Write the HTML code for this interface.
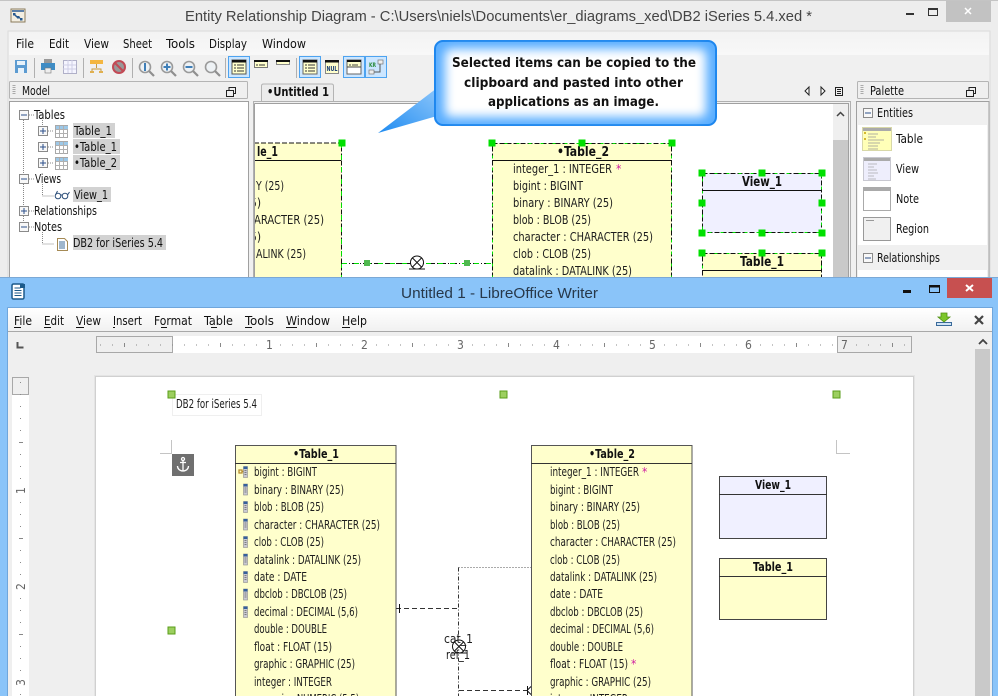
<!DOCTYPE html>
<html><head><meta charset="utf-8"><title>Entity Relationship Diagram</title>
<style>
html,body{margin:0;padding:0;width:998px;height:696px;overflow:hidden;background:#f0f0f0}
svg{display:block;font-family:"DejaVu Sans Condensed","DejaVu Sans",sans-serif;font-stretch:condensed;font-size:12px;fill:#1a1a1a}
.b{font-weight:bold}.t{font-size:13px}.m{fill:#111}.r{fill:#1c1c1c}.g{fill:#666;font-size:12px}.w{font-size:12px}
.ti{font-family:"Liberation Sans",sans-serif;font-stretch:normal;font-size:15px}
</style></head><body>
<svg width="998" height="696" viewBox="0 0 998 696" xmlns="http://www.w3.org/2000/svg">
<defs>
<linearGradient id="mg" x1="0" y1="0" x2="0" y2="1"><stop offset="0" stop-color="#f3f3f3"/><stop offset="1" stop-color="#f8f8f8"/></linearGradient>
<linearGradient id="wm" x1="0" y1="0" x2="0" y2="1"><stop offset="0" stop-color="#fff"/><stop offset="1" stop-color="#f1f1f1"/></linearGradient>
<linearGradient id="tl" x1="0" y1="1" x2="1" y2="0"><stop offset="0" stop-color="#1f8bf0"/><stop offset="1" stop-color="#8cc6fb"/></linearGradient>
<filter id="bl" x="-20%" y="-30%" width="140%" height="160%"><feGaussianBlur stdDeviation="5"/></filter>
<clipPath id="can"><rect x="255" y="104" width="578" height="173"/></clipPath>
<clipPath id="pg"><rect x="96" y="376" width="817" height="320"/></clipPath>
<g id="h"><rect x="-3.5" y="-3.5" width="7" height="7" fill="#00e000"/></g>
<g id="wh"><rect x="-3.5" y="-3.5" width="7" height="7" fill="#9ccf5f" stroke="#5a9e1a"/></g>
<g id="plus"><rect x=".5" y=".5" width="9" height="9" fill="#f8f8f8" stroke="#8a8a8a"/><path d="M2 5h6M5 2v6" stroke="#2d4f8a" fill="none"/></g>
<g id="minus"><rect x=".5" y=".5" width="9" height="9" fill="#f8f8f8" stroke="#8a8a8a"/><path d="M2 5h6" stroke="#2d4f8a" fill="none"/></g>
<g id="grid"><rect x=".5" y=".5" width="12" height="12" fill="#fff" stroke="#a8a8a8"/><rect x="1" y="1" width="12" height="3" fill="#9cc8e8"/><path d="M1 4.500h12M1 8.500h12M4.500 1v12M8.500 1v12" stroke="#b0b0b0" fill="none"/></g>
<g id="col"><rect x="0" y="0" width="4" height="11" fill="#c9c9d2" stroke="#8c8c8c" stroke-width=".6"/><rect x="0" y="0" width="4" height="2.500" fill="#35609c"/><path d="M1 4h2M1 6h2M1 8h2" stroke="#666" stroke-width=".7"/></g>
<g id="mag"><circle cx="7" cy="7" r="5.500" fill="#eef2f5" stroke="#9a9a9a" stroke-width="1.600"/><path d="M11 11l5 5" stroke="#8f8f8f" stroke-width="2.200"/></g>
<g id="tog"><rect x=".5" y=".5" width="21" height="21" fill="#cce6ff" stroke="#4da3f0"/></g>
<g id="sym"><circle cx="0" cy="-.5" r="6.500" fill="#fff" stroke="#111"/><path d="M-8 6h16" stroke="#111"/><path d="M-4.500 4L4.500 -5M-4.500 -5L4.500 4" stroke="#111" fill="none"/></g>
</defs>

<!-- TOP WINDOW -->
<rect width="998" height="278" fill="#ededed"/>
<rect x="0" y="0" width="998" height="1" fill="#c4c4c4"/>
<rect x="11" y="9" width="14" height="13" fill="#f4efe2" stroke="#8a7b5c"/>
<rect x="12" y="10" width="12" height="2" fill="#5b7fa8"/>
<path d="M14 14l3 3 3 1" stroke="#27598f" stroke-width="1.500" fill="none"/>
<rect x="13" y="13" width="2.500" height="2.500" fill="#27598f"/><rect x="17" y="16" width="2.500" height="2.500" fill="#27598f"/><rect x="20" y="18" width="2.500" height="2.500" fill="#27598f"/>
<text x="185" y="21" class="ti" style="fill:#444" textLength="627" lengthAdjust="spacingAndGlyphs">Entity Relationship Diagram - C:\Users\niels\Documents\er_diagrams_xed\DB2 iSeries 5.4.xed *</text>
<rect x="906" y="13" width="8" height="2" fill="#333"/>
<rect x="928.500" y="8.500" width="9" height="7" fill="none" stroke="#333"/><rect x="928" y="8" width="10" height="2" fill="#333"/>
<rect x="946" y="1" width="45" height="21" fill="#c2c2c2"/>
<path d="M965 8l6 6M971 8l-6 6" stroke="#fff" stroke-width="1.500"/>

<rect x="8" y="31" width="982" height="247" fill="#f0f0f0" stroke="#dcdcdc"/>
<rect x="9" y="32" width="980" height="23" fill="url(#mg)"/>
<g class="m">
<text x="16" y="48" textLength="18" lengthAdjust="spacingAndGlyphs">File</text>
<text x="49" y="48" textLength="20" lengthAdjust="spacingAndGlyphs">Edit</text>
<text x="84" y="48" textLength="25" lengthAdjust="spacingAndGlyphs">View</text>
<text x="123" y="48" textLength="29" lengthAdjust="spacingAndGlyphs">Sheet</text>
<text x="166" y="48" textLength="29" lengthAdjust="spacingAndGlyphs">Tools</text>
<text x="209" y="48" textLength="38" lengthAdjust="spacingAndGlyphs">Display</text>
<text x="262" y="48" textLength="44" lengthAdjust="spacingAndGlyphs">Window</text>
</g>
<!-- toolbar -->
<path d="M15 60h12v13h-12z" fill="#5c9bd1"/><rect x="17" y="61" width="8" height="4" fill="#e8f2fa"/><rect x="18" y="68" width="6" height="5" fill="#e8f2fa"/>
<rect x="34" y="58" width="1" height="20" fill="#b0b0b0"/>
<rect x="41" y="63" width="14" height="7" fill="#3f8cc4"/><rect x="44" y="59" width="8" height="4" fill="#999"/><rect x="45" y="68" width="6" height="5" fill="#eee" stroke="#777" stroke-width=".6"/>
<rect x="63.500" y="60.500" width="13" height="13" fill="#f5f5ff" stroke="#b0b0c8"/><path d="M63 65h13M63 69h13M68 60v13M72 60v13" stroke="#cfcfe6" fill="none"/>
<rect x="83" y="58" width="1" height="20" fill="#b0b0b0"/>
<rect x="90" y="60" width="13" height="4" fill="#f4b63f"/><path d="M96.500 64v4M92 72v-3h9v3" stroke="#c89a3c" fill="none"/><rect x="90" y="71" width="4" height="2" fill="#e0b050"/><rect x="99" y="71" width="4" height="2" fill="#e0b050"/>
<circle cx="119" cy="67" r="6" fill="#999" stroke="#c24a55" stroke-width="2"/><path d="M115 63l8 8" stroke="#c24a55" stroke-width="2"/>
<rect x="132" y="58" width="1" height="20" fill="#b0b0b0"/>
<use href="#mag" x="138" y="60"/><rect x="144" y="63" width="2" height="8" fill="#3f7fb8"/>
<use href="#mag" x="160" y="60"/><path d="M163.500 67h7M167 63.500v7" stroke="#3f7fb8" stroke-width="2"/>
<use href="#mag" x="182" y="60"/><path d="M185.500 67h7" stroke="#3f7fb8" stroke-width="2"/>
<use href="#mag" x="204" y="60"/>
<rect x="225" y="58" width="1" height="20" fill="#b0b0b0"/>
<use href="#tog" x="228" y="56"/>
<rect x="232" y="60" width="14" height="14" fill="#ffffcc" stroke="#555"/><rect x="232" y="60" width="14" height="2.500" fill="#111"/><path d="M234 65h2M237 65h7M234 68h2M237 68h7M234 71h2M237 71h7" stroke="#333" fill="none"/>
<rect x="254.500" y="60.500" width="13" height="7" fill="#ffffcc" stroke="#777"/><rect x="254" y="60" width="14" height="2" fill="#111"/><path d="M256 65h2M259 65h6" stroke="#333"/>
<rect x="276.500" y="60.500" width="13" height="4" fill="#ffffcc" stroke="#888"/><rect x="276" y="60" width="14" height="2" fill="#111"/>
<rect x="296" y="58" width="1" height="20" fill="#b0b0b0"/>
<use href="#tog" x="299" y="56"/>
<rect x="303" y="60" width="14" height="14" fill="#ffffcc" stroke="#666"/><rect x="303" y="60" width="14" height="2.500" fill="#111"/><path d="M305 65h2M308 65h7M305 68h2M308 68h7M305 71h2M308 71h7" stroke="#333" fill="none"/>
<rect x="325.500" y="60.500" width="13" height="13" fill="#ffffcc" stroke="#888"/><rect x="325" y="60" width="14" height="2.500" fill="#111"/>
<text x="326.500" y="71" class="b" style="font-size:7px;fill:#1d3f78" textLength="11" lengthAdjust="spacingAndGlyphs">NUL</text>
<use href="#tog" x="343" y="56"/>
<rect x="347" y="60" width="14" height="14" fill="#fff" stroke="#666"/><rect x="347.500" y="60.500" width="13" height="6" fill="#ffffcc"/><rect x="347" y="60" width="14" height="2" fill="#111"/><path d="M349 65h2M352 65h6M347 67h14" stroke="#444"/>
<use href="#tog" x="365" y="56"/>
<text x="369" y="67" class="b" style="font-size:6px;fill:#2a8a3a" textLength="7" lengthAdjust="spacingAndGlyphs">KR</text>
<rect x="378" y="60" width="5" height="4" fill="#eee" stroke="#777" stroke-width=".7"/><rect x="369" y="70" width="5" height="4" fill="#eee" stroke="#777" stroke-width=".7"/><path d="M380 64v8h-6" fill="none" stroke="#555"/>

<!-- model panel -->
<rect x="9.500" y="81.500" width="238" height="17" rx="1" fill="#efefef" stroke="#b4b4b4"/>
<path d="M14 85v10" stroke="#aaa" stroke-dasharray="1 1" stroke-width="3"/>
<text x="22" y="95" class="m" textLength="28" lengthAdjust="spacingAndGlyphs">Model</text>
<rect x="226.500" y="90.500" width="7" height="6" fill="none" stroke="#222"/><path d="M229 90v-2.500h6.500v6h-2" fill="none" stroke="#222"/>
<rect x="9.500" y="101.500" width="239" height="180" fill="#fff" stroke="#a0a0a0"/>
<!-- tree -->
<path d="M23.500 120v108M29 115h5M29 179h5M29 211h5M29 227h5M48 131h6M48 147h6M48 163h6" stroke="#888" stroke-dasharray="1 1" fill="none"/>
<path d="M42.500 120v12M42.500 184v12h12M42.500 232v12h12" stroke="#888" stroke-dasharray="1 1" fill="none"/>
<use href="#minus" x="19" y="110"/><use href="#minus" x="19" y="174"/><use href="#plus" x="19" y="206"/><use href="#minus" x="19" y="222"/>
<use href="#plus" x="38" y="126"/><use href="#plus" x="38" y="142"/><use href="#plus" x="38" y="158"/>
<use href="#grid" x="55" y="125"/><use href="#grid" x="55" y="141"/><use href="#grid" x="55" y="157"/>
<rect x="73" y="123" width="42" height="15" fill="#d2d2d2"/><rect x="73" y="139" width="47" height="15" fill="#d2d2d2"/><rect x="73" y="155" width="47" height="15" fill="#d2d2d2"/><rect x="73" y="187" width="38" height="15" fill="#d2d2d2"/><rect x="73" y="235" width="93" height="15" fill="#d2d2d2"/>
<g class="m">
<text x="34" y="119" textLength="31" lengthAdjust="spacingAndGlyphs">Tables</text>
<text x="74" y="135" textLength="38" lengthAdjust="spacingAndGlyphs">Table_1</text>
<text x="74" y="151" textLength="43" lengthAdjust="spacingAndGlyphs">•Table_1</text>
<text x="74" y="167" textLength="43" lengthAdjust="spacingAndGlyphs">•Table_2</text>
<text x="35" y="183" textLength="26" lengthAdjust="spacingAndGlyphs">Views</text>
<text x="74" y="199" textLength="34" lengthAdjust="spacingAndGlyphs">View_1</text>
<text x="34" y="215" textLength="63" lengthAdjust="spacingAndGlyphs">Relationships</text>
<text x="34" y="231" textLength="28" lengthAdjust="spacingAndGlyphs">Notes</text>
<text x="73" y="247" textLength="90" lengthAdjust="spacingAndGlyphs">DB2 for iSeries 5.4</text>
</g>
<g fill="none" stroke="#2d4f7a"><circle cx="58" cy="196" r="2.800"/><circle cx="65" cy="196" r="2.800"/><path d="M60.500 195h2M55.500 195l2-4M67.500 195l2-3"/></g>
<path d="M57.500 238.500h7l3 3v9h-10z" fill="#fff" stroke="#a58a55"/><path d="M59 242h6M59 244h6M59 246h6M59 248h6" stroke="#3f6c9a"/>

<!-- editor -->
<path d="M261.500 102v-16q0-2 2-2h68q2 0 2 2v16" fill="#ececec" stroke="#b4b4b4"/>
<text x="267" y="96" class="b" style="fill:#111" textLength="62" lengthAdjust="spacingAndGlyphs">•Untitled 1</text>
<rect x="253.500" y="101.500" width="597" height="180" fill="#f0f0f0" stroke="#b0b0b0"/>
<rect x="255" y="104" width="578" height="174" fill="#fff" stroke="none"/>
<path d="M254.500 103.500h594v175" fill="none" stroke="#a0a0a0"/><path d="M254.500 103.500v175" stroke="#a0a0a0"/>
<rect x="833" y="104" width="15" height="174" fill="#efefef"/><rect x="833" y="140" width="15" height="138" fill="#c9c9c9"/>
<path d="M837 116l3.500-3.500 3.500 3.500" fill="none" stroke="#444" stroke-width="1.500"/>
<path d="M809 87v8l-4-4zM821 87v8l4-4z" fill="#fff" stroke="#222"/>
<rect x="835.500" y="87.500" width="7" height="8" fill="none" stroke="#222"/><path d="M837 89.500h4M837 91.500h4M837 93.500h4" stroke="#222"/>

<g clip-path="url(#can)">
<rect x="240" y="143" width="101.500" height="140" fill="#ffffcc" stroke="#111" stroke-dasharray="5 2"/>
<path d="M240 160.500h101" stroke="#111"/>
<path d="M341.500 143v140" stroke="#00e000" stroke-dasharray="5 7"/>
<text x="257" y="156" class="b t" fill="#111" textLength="21" lengthAdjust="spacingAndGlyphs">le_1</text>
<g class="r">
<text x="256" y="190" textLength="28" lengthAdjust="spacingAndGlyphs">Y (25)</text>
<text x="250" y="207">5)</text>
<text x="254" y="224" textLength="70" lengthAdjust="spacingAndGlyphs">ARACTER (25)</text>
<text x="250" y="241">5)</text>
<text x="256" y="258" textLength="50" lengthAdjust="spacingAndGlyphs">ALINK (25)</text>
</g>
<!-- conn -->
<path d="M341 263.500h151" stroke="#111" stroke-dasharray="6 2 1 2"/>
<path d="M341 263.500h151" stroke="#00e000" stroke-dasharray="5 7" stroke-dashoffset="-1"/>
<rect x="364" y="260" width="6" height="6" fill="#4fb84f"/><rect x="464" y="260" width="6" height="6" fill="#4fb84f"/>
<use href="#sym" x="417" y="263"/>
<!-- Table_2 -->
<rect x="492.500" y="143.500" width="179" height="140" fill="#ffffcc" stroke="#111" stroke-dasharray="5 2"/>
<path d="M492.500 143.500v140M671.500 143.500v140M492.500 143.500h179" stroke="#00e000" stroke-dasharray="3 9" fill="none"/>
<path d="M492 160.500h180" stroke="#111"/>
<text x="557" y="156" class="b t" fill="#111" textLength="52" lengthAdjust="spacingAndGlyphs">•Table_2</text>
<g class="r">
<text x="513" y="173" textLength="99" lengthAdjust="spacingAndGlyphs">integer_1 : INTEGER</text>
<text x="513" y="190" textLength="70" lengthAdjust="spacingAndGlyphs">bigint : BIGINT</text>
<text x="513" y="207" textLength="100" lengthAdjust="spacingAndGlyphs">binary : BINARY (25)</text>
<text x="513" y="224" textLength="78" lengthAdjust="spacingAndGlyphs">blob : BLOB (25)</text>
<text x="513" y="241" textLength="140" lengthAdjust="spacingAndGlyphs">character : CHARACTER (25)</text>
<text x="513" y="258" textLength="78" lengthAdjust="spacingAndGlyphs">clob : CLOB (25)</text>
<text x="513" y="275" textLength="119" lengthAdjust="spacingAndGlyphs">datalink : DATALINK (25)</text>
</g>
<text x="616" y="173" style="fill:#d020a0;font-size:12px">*</text>
<!-- View_1 -->
<rect x="702.500" y="173.500" width="119" height="59" fill="#f0f0ff" stroke="#111" stroke-dasharray="5 2"/>
<path d="M702.500 173.500h119v59h-119z" fill="none" stroke="#00e000" stroke-dasharray="3 9"/>
<path d="M702 190.500h120" stroke="#111"/>
<text x="742" y="186" class="b t" fill="#111" textLength="40" lengthAdjust="spacingAndGlyphs">View_1</text>
<!-- Table_1 small -->
<rect x="702.500" y="253.500" width="119" height="60" fill="#ffffcc" stroke="#111" stroke-dasharray="5 2"/>
<path d="M702.500 253.500h119M702.500 253.500v30M821.500 253.500v30" fill="none" stroke="#00e000" stroke-dasharray="3 9"/>
<path d="M702 270.500h120" stroke="#111"/>
<text x="740" y="266" class="b t" fill="#111" textLength="44" lengthAdjust="spacingAndGlyphs">Table_1</text>
<use href="#h" x="342" y="143"/>
<use href="#h" x="492" y="143"/><use href="#h" x="582" y="143"/><use href="#h" x="672" y="143"/>
<use href="#h" x="702" y="173"/><use href="#h" x="762" y="173"/><use href="#h" x="822" y="173"/>
<use href="#h" x="702" y="203"/><use href="#h" x="822" y="203"/>
<use href="#h" x="702" y="233"/><use href="#h" x="762" y="233"/><use href="#h" x="822" y="233"/>
<use href="#h" x="702" y="253"/><use href="#h" x="762" y="253"/><use href="#h" x="822" y="253"/>
</g>

<!-- palette -->
<rect x="857.500" y="81.500" width="131" height="17" rx="1" fill="#efefef" stroke="#b4b4b4"/>
<path d="M862 85v10" stroke="#aaa" stroke-dasharray="1 1" stroke-width="3"/>
<text x="870" y="95" class="m" textLength="34" lengthAdjust="spacingAndGlyphs">Palette</text>
<rect x="966.500" y="90.500" width="7" height="6" fill="none" stroke="#222"/><path d="M969 90v-2.500h6.500v6h-2" fill="none" stroke="#222"/>
<rect x="856.500" y="101.500" width="132.500" height="180" fill="#f0f0f0" stroke="#a0a0a0"/>
<rect x="858" y="125" width="129" height="120" fill="#fff"/><rect x="858" y="270" width="129" height="10" fill="#fff"/>
<use href="#minus" x="863" y="108"/><use href="#minus" x="863" y="253"/>
<text x="877" y="117" class="m" textLength="36" lengthAdjust="spacingAndGlyphs">Entities</text>
<text x="877" y="262" class="m" textLength="63" lengthAdjust="spacingAndGlyphs">Relationships</text>
<g class="m">
<text x="896" y="143" textLength="27" lengthAdjust="spacingAndGlyphs">Table</text>
<text x="896" y="173" textLength="23" lengthAdjust="spacingAndGlyphs">View</text>
<text x="896" y="203" textLength="23" lengthAdjust="spacingAndGlyphs">Note</text>
<text x="896" y="233" textLength="33" lengthAdjust="spacingAndGlyphs">Region</text>
</g>
<rect x="862.500" y="127.500" width="29" height="23" fill="#ffffb8" stroke="#d8d8a8"/><rect x="863" y="128" width="28" height="3" fill="#aaa"/><path d="M868 134h10M868 137h8M868 140h16M868 143h12M868 146h10M868 149h10" stroke="#999" stroke-width=".7"/><path d="M864 133h2M864 139h2" stroke="#c9a000" stroke-width="1.500"/>
<rect x="863.500" y="157.500" width="27" height="23" fill="#eeeefc" stroke="#c8c8d0"/><rect x="864" y="158" width="26" height="3" fill="#aaa"/><path d="M868 164h9M868 167h6M868 170h9M868 173h10M868 176h6M868 179h8" stroke="#aaa" stroke-width=".7"/>
<rect x="863.500" y="187.500" width="27" height="23" fill="#fff" stroke="#aaa"/><rect x="864" y="188" width="26" height="3" fill="#aaa"/>
<rect x="863.500" y="217.500" width="27" height="23" fill="#f0f0f0" stroke="#999"/><path d="M866 220.500h8" stroke="#999"/>

<!-- WRITER WINDOW -->
<rect x="0" y="278" width="998" height="418" fill="#8ac4f9"/>
<rect x="0" y="277" width="998" height="1" fill="#7ca9d6"/>
<rect x="12" y="284" width="12" height="15" rx="1.500" fill="#fff" stroke="#1c5a8a" stroke-width="1.500"/><path d="M20 284l5 0 0 4-5 0z" fill="#1c5a8a"/><path d="M14.500 288h6M14.500 290.500h7M14.500 293h7M14.500 295.500h7" stroke="#1c5a8a"/>
<text x="401" y="298" class="ti" style="fill:#27384a" textLength="197" lengthAdjust="spacingAndGlyphs">Untitled 1 - LibreOffice Writer</text>
<rect x="903" y="290" width="8" height="3" fill="#111"/>
<rect x="929.500" y="285.500" width="10" height="7" fill="none" stroke="#111"/><rect x="929" y="285" width="11" height="2.500" fill="#111"/>
<rect x="947" y="278" width="45" height="20" fill="#c75050"/>
<path d="M966 285l7 6M973 285l-7 6" stroke="#fff" stroke-width="2"/>

<rect x="8" y="308" width="984" height="388" fill="#efefef"/>
<path d="M7.500 307.500h985V696M7.500 307.500V696" fill="none" stroke="#6fa6dc"/>
<rect x="8" y="308" width="984" height="23" fill="url(#wm)"/>
<rect x="8" y="331" width="984" height="1" fill="#a8a8a8"/>
<g class="m">
<text x="14" y="325" textLength="18" lengthAdjust="spacingAndGlyphs">File</text>
<text x="44" y="325" textLength="20" lengthAdjust="spacingAndGlyphs">Edit</text>
<text x="76" y="325" textLength="25" lengthAdjust="spacingAndGlyphs">View</text>
<text x="113" y="325" textLength="29" lengthAdjust="spacingAndGlyphs">Insert</text>
<text x="154" y="325" textLength="38" lengthAdjust="spacingAndGlyphs">Format</text>
<text x="204" y="325" textLength="29" lengthAdjust="spacingAndGlyphs">Table</text>
<text x="245" y="325" textLength="29" lengthAdjust="spacingAndGlyphs">Tools</text>
<text x="286" y="325" textLength="44" lengthAdjust="spacingAndGlyphs">Window</text>
<text x="342" y="325" textLength="25" lengthAdjust="spacingAndGlyphs">Help</text>
</g>
<path d="M14 327.500h7M44 327.500h7M76 327.500h8M113 327.500h2M161 327.500h6M211 327.500h6M245 327.500h7M286 327.500h11M342 327.500h8" stroke="#111"/>
<path d="M936.500 325.500h15v-3h-15z" fill="#cfe3f5" stroke="#3a6a9a"/><path d="M941 313h6v4h3l-6 5-6-5h3z" fill="#7cc62a" stroke="#4f8f12" stroke-width=".8"/>
<path d="M975 316l8 8M983 316l-8 8" stroke="#444" stroke-width="2.200"/>
<path d="M17.500 342v5.500h6" fill="none" stroke="#555" stroke-width="2"/>

<!-- h-ruler -->
<rect x="96" y="336" width="816" height="17" fill="#fff"/>
<rect x="96.500" y="336.500" width="76" height="16" fill="#efefef" stroke="#a8a8a8"/>
<rect x="837.500" y="336.500" width="74" height="16" fill="#efefef" stroke="#a8a8a8"/>
<path d="M100 345h808" stroke="#8a8a8a" stroke-dasharray="1 11"/>
<path d="M124.500 343v4M220.500 343v4M316.500 343v4M412.500 343v4M508.500 343v4M604.500 343v4M700.500 343v4M796.500 343v4M892.500 343v4" stroke="#888"/>
<g class="g"><rect x="264" y="338" width="10" height="14" fill="#fff"/><text x="266" y="349">1</text>
<rect x="360" y="338" width="10" height="14" fill="#fff"/><text x="361" y="349">2</text>
<rect x="456" y="338" width="10" height="14" fill="#fff"/><text x="457" y="349">3</text>
<rect x="552" y="338" width="10" height="14" fill="#fff"/><text x="553" y="349">4</text>
<rect x="648" y="338" width="10" height="14" fill="#fff"/><text x="649" y="349">5</text>
<rect x="744" y="338" width="10" height="14" fill="#fff"/><text x="745" y="349">6</text>
<rect x="839" y="338" width="10" height="13" fill="#efefef"/><text x="841" y="349">7</text></g>

<!-- scrollbar -->
<rect x="975" y="332" width="15" height="364" fill="#efefef"/><rect x="975" y="349" width="15" height="347" fill="#c9c9c9"/>
<path d="M979 344l4-4 4 4" fill="none" stroke="#444" stroke-width="1.800"/>

<!-- v-ruler -->
<rect x="12" y="394" width="17" height="302" fill="#fff"/>
<rect x="12.500" y="377.500" width="16" height="17" fill="#efefef" stroke="#a8a8a8"/>
<path d="M20.500 382v314" stroke="#8a8a8a" stroke-dasharray="1 11"/>
<path d="M19 442.500h4M19 538.500h4M19 634.500h4" stroke="#888"/>
<g class="g"><rect x="14" y="484" width="12" height="12" fill="#fff"/><text transform="translate(25 494) rotate(-90)">1</text>
<rect x="14" y="580" width="12" height="12" fill="#fff"/><text transform="translate(25 590) rotate(-90)">2</text>
<rect x="14" y="676" width="12" height="12" fill="#fff"/><text transform="translate(25 686) rotate(-90)">3</text></g>

<!-- page -->
<rect x="94" y="375" width="821" height="321" fill="#e4e4e4"/>
<rect x="96" y="377" width="817" height="319" fill="#fff"/>
<path d="M95.500 696V376.500H913.500V696" fill="none" stroke="#d0d0d0"/>
<g clip-path="url(#pg)" class="w">
<rect x="172.500" y="394.500" width="89" height="21" fill="#fff" stroke="#efefef"/>
<text x="176" y="408" class="r" textLength="81" lengthAdjust="spacingAndGlyphs">DB2 for iSeries 5.4</text>
<path d="M160 453.500h11.500V440M850 453.500h-13.500V440" fill="none" stroke="#c4c4c4"/>
<rect x="172" y="454" width="22" height="22" fill="#6f6f6f"/>
<g fill="none" stroke="#fff" stroke-width="1.300"><circle cx="183" cy="459" r="1.500"/><path d="M183 461v10M180 462.500h6M177.500 466c0 3 2.500 5 5.500 5s5.500-2 5.500-5"/></g>

<!-- writer tables -->
<rect x="235.500" y="445.500" width="160.500" height="270" fill="#ffffcc" stroke="#555"/>
<path d="M235 463.500h161" stroke="#333"/>
<text x="293" y="458" class="b" style="fill:#111" textLength="46" lengthAdjust="spacingAndGlyphs">•Table_1</text>
<path d="M239 470h3v3h-3zM242 471.500h3" fill="none" stroke="#b58a30" stroke-width="1.300"/>
<use href="#col" x="243.500" y="466.500"/><use href="#col" x="243.500" y="484"/><use href="#col" x="243.500" y="501.500"/><use href="#col" x="243.500" y="519"/><use href="#col" x="243.500" y="536.500"/><use href="#col" x="243.500" y="554"/><use href="#col" x="243.500" y="571.500"/><use href="#col" x="243.500" y="589"/><use href="#col" x="243.500" y="606.500"/>
<g class="r">
<text x="254" y="476" textLength="63" lengthAdjust="spacingAndGlyphs">bigint : BIGINT</text>
<text x="254" y="494" textLength="90" lengthAdjust="spacingAndGlyphs">binary : BINARY (25)</text>
<text x="254" y="511" textLength="70" lengthAdjust="spacingAndGlyphs">blob : BLOB (25)</text>
<text x="254" y="529" textLength="126" lengthAdjust="spacingAndGlyphs">character : CHARACTER (25)</text>
<text x="254" y="546" textLength="70" lengthAdjust="spacingAndGlyphs">clob : CLOB (25)</text>
<text x="254" y="564" textLength="107" lengthAdjust="spacingAndGlyphs">datalink : DATALINK (25)</text>
<text x="254" y="581" textLength="53" lengthAdjust="spacingAndGlyphs">date : DATE</text>
<text x="254" y="598" textLength="93" lengthAdjust="spacingAndGlyphs">dbclob : DBCLOB (25)</text>
<text x="254" y="616" textLength="104" lengthAdjust="spacingAndGlyphs">decimal : DECIMAL (5,6)</text>
<text x="254" y="633" textLength="73" lengthAdjust="spacingAndGlyphs">double : DOUBLE</text>
<text x="254" y="651" textLength="78" lengthAdjust="spacingAndGlyphs">float : FLOAT (15)</text>
<text x="254" y="668" textLength="101" lengthAdjust="spacingAndGlyphs">graphic : GRAPHIC (25)</text>
<text x="254" y="686" textLength="78" lengthAdjust="spacingAndGlyphs">integer : INTEGER</text>
<text x="254" y="703" textLength="105" lengthAdjust="spacingAndGlyphs">numeric : NUMERIC (5,5)</text>
</g>
<rect x="531.500" y="445.500" width="160.500" height="270" fill="#ffffcc" stroke="#555"/>
<path d="M531 463.500h161" stroke="#333"/>
<text x="589" y="458" class="b" style="fill:#111" textLength="46" lengthAdjust="spacingAndGlyphs">•Table_2</text>
<g class="r">
<text x="550" y="476" textLength="89" lengthAdjust="spacingAndGlyphs">integer_1 : INTEGER</text>
<text x="550" y="494" textLength="63" lengthAdjust="spacingAndGlyphs">bigint : BIGINT</text>
<text x="550" y="511" textLength="90" lengthAdjust="spacingAndGlyphs">binary : BINARY (25)</text>
<text x="550" y="529" textLength="70" lengthAdjust="spacingAndGlyphs">blob : BLOB (25)</text>
<text x="550" y="546" textLength="126" lengthAdjust="spacingAndGlyphs">character : CHARACTER (25)</text>
<text x="550" y="564" textLength="70" lengthAdjust="spacingAndGlyphs">clob : CLOB (25)</text>
<text x="550" y="581" textLength="107" lengthAdjust="spacingAndGlyphs">datalink : DATALINK (25)</text>
<text x="550" y="598" textLength="53" lengthAdjust="spacingAndGlyphs">date : DATE</text>
<text x="550" y="616" textLength="93" lengthAdjust="spacingAndGlyphs">dbclob : DBCLOB (25)</text>
<text x="550" y="633" textLength="104" lengthAdjust="spacingAndGlyphs">decimal : DECIMAL (5,6)</text>
<text x="550" y="651" textLength="73" lengthAdjust="spacingAndGlyphs">double : DOUBLE</text>
<text x="550" y="668" textLength="78" lengthAdjust="spacingAndGlyphs">float : FLOAT (15)</text>
<text x="550" y="686" textLength="101" lengthAdjust="spacingAndGlyphs">graphic : GRAPHIC (25)</text>
<text x="550" y="703" textLength="78" lengthAdjust="spacingAndGlyphs">integer : INTEGER</text>
</g>
<text x="642" y="476" style="fill:#d020a0;font-size:12px">*</text>
<text x="631" y="668" style="fill:#d020a0;font-size:12px">*</text>
<rect x="719.500" y="476.500" width="107" height="62" fill="#f0f0ff" stroke="#444"/><path d="M719 494.500h108" stroke="#333"/>
<text x="755" y="489" class="b" style="fill:#111" textLength="36" lengthAdjust="spacingAndGlyphs">View_1</text>
<rect x="719.500" y="558.500" width="107" height="61" fill="#ffffcc" stroke="#444"/><path d="M719 576.500h108" stroke="#333"/>
<text x="753" y="571" class="b" style="fill:#111" textLength="40" lengthAdjust="spacingAndGlyphs">Table_1</text>
<!-- connectors -->
<path d="M396 608.500h62" stroke="#333" stroke-dasharray="5 3"/>
<path d="M399.500 604v9" stroke="#111"/>
<path d="M458.500 567.500H531" stroke="#555" stroke-dasharray="1 2"/>
<path d="M458.500 567.500V696" stroke="#333" stroke-dasharray="4 2 1 2"/>
<path d="M459 690.500h68" stroke="#333" stroke-dasharray="5 3"/>
<path d="M527.500 686v9M527 690.500l4-4M527 690.500l4 4" stroke="#111" fill="none"/>
<use href="#sym" x="459" y="647"/>
<text x="444" y="643" class="r" textLength="29" lengthAdjust="spacingAndGlyphs">cat_1</text>
<text x="446" y="659" class="r" textLength="24" lengthAdjust="spacingAndGlyphs">ref_1</text>
<use href="#wh" x="171.500" y="394.500"/><use href="#wh" x="503.500" y="394.500"/><use href="#wh" x="836.500" y="394.500"/><use href="#wh" x="171.500" y="630.500"/>
</g>

<!-- CALLOUT -->
<path d="M437 88L378 133 L437 116Z" fill="url(#tl)"/>
<rect x="435" y="41" width="281" height="84" rx="8" fill="#5aaeff" stroke="#1c86ee" stroke-width="2"/>
<rect x="445" y="49" width="261" height="68" rx="6" fill="#fff" filter="url(#bl)"/>
<g class="b" style="font-size:13px;fill:#111">
<text x="452" y="67" textLength="244" lengthAdjust="spacingAndGlyphs">Selected items can be copied to the</text>
<text x="464" y="87" textLength="219" lengthAdjust="spacingAndGlyphs">clipboard and pasted into other</text>
<text x="488" y="106" textLength="171" lengthAdjust="spacingAndGlyphs">applications as an image.</text>
</g>
</svg>
</body></html>
